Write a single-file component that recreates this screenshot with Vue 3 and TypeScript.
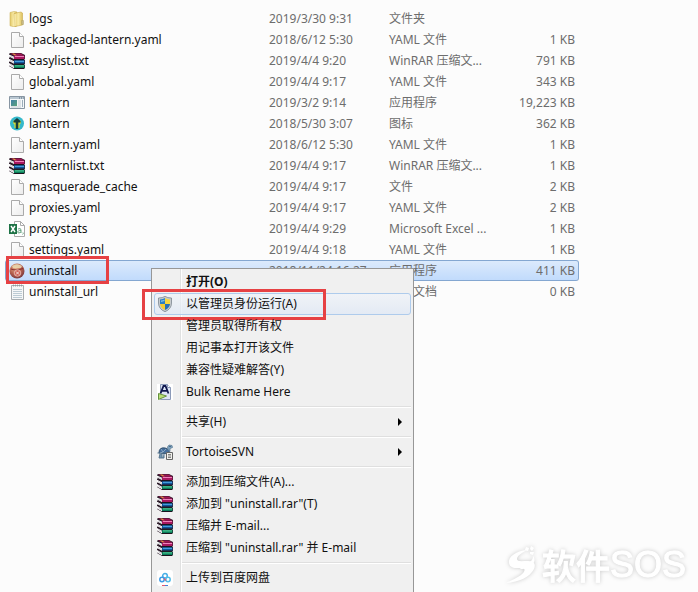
<script setup lang="ts">
type IconName =
  | 'folder' | 'page' | 'rar' | 'window' | 'lantern' | 'excel' | 'uninstall' | 'text'
  | 'shield' | 'rename' | 'tortoise' | 'cloud'

interface FileEntry {
  icon: IconName
  name: string
  date: string
  type: string
  size: string
  selected?: boolean
}

interface MenuEntry {
  label: string
  icon?: IconName
  bold?: boolean
  active?: boolean
  submenu?: boolean
}

const files: FileEntry[] = [
  { icon: 'folder', name: 'logs', date: '2019/3/30 9:31', type: '文件夹', size: '' },
  { icon: 'page', name: '.packaged-lantern.yaml', date: '2018/6/12 5:30', type: 'YAML 文件', size: '1 KB' },
  { icon: 'rar', name: 'easylist.txt', date: '2019/4/4 9:20', type: 'WinRAR 压缩文...', size: '791 KB' },
  { icon: 'page', name: 'global.yaml', date: '2019/4/4 9:17', type: 'YAML 文件', size: '343 KB' },
  { icon: 'window', name: 'lantern', date: '2019/3/2 9:14', type: '应用程序', size: '19,223 KB' },
  { icon: 'lantern', name: 'lantern', date: '2018/5/30 3:07', type: '图标', size: '362 KB' },
  { icon: 'page', name: 'lantern.yaml', date: '2018/6/12 5:30', type: 'YAML 文件', size: '1 KB' },
  { icon: 'rar', name: 'lanternlist.txt', date: '2019/4/4 9:17', type: 'WinRAR 压缩文...', size: '1 KB' },
  { icon: 'page', name: 'masquerade_cache', date: '2019/4/4 9:17', type: '文件', size: '2 KB' },
  { icon: 'page', name: 'proxies.yaml', date: '2019/4/4 9:17', type: 'YAML 文件', size: '2 KB' },
  { icon: 'excel', name: 'proxystats', date: '2019/4/4 9:29', type: 'Microsoft Excel ...', size: '1 KB' },
  { icon: 'page', name: 'settings.yaml', date: '2019/4/4 9:18', type: 'YAML 文件', size: '1 KB' },
  { icon: 'uninstall', name: 'uninstall', date: '2018/11/24 16:27', type: '应用程序', size: '411 KB', selected: true },
  { icon: 'text', name: 'uninstall_url', date: '', type: '文本文档', size: '0 KB' },
]

const menuGroups: MenuEntry[][] = [
  [
    { label: '打开(O)', bold: true },
    { label: '以管理员身份运行(A)', icon: 'shield', active: true },
    { label: '管理员取得所有权' },
    { label: '用记事本打开该文件' },
    { label: '兼容性疑难解答(Y)' },
    { label: 'Bulk Rename Here', icon: 'rename' },
  ],
  [{ label: '共享(H)', submenu: true }],
  [{ label: 'TortoiseSVN', icon: 'tortoise', submenu: true }],
  [
    { label: '添加到压缩文件(A)...', icon: 'rar' },
    { label: '添加到 "uninstall.rar"(T)', icon: 'rar' },
    { label: '压缩并 E-mail...', icon: 'rar' },
    { label: '压缩到 "uninstall.rar" 并 E-mail', icon: 'rar' },
  ],
  [{ label: '上传到百度网盘', icon: 'cloud' }],
]
</script>

<template>
  <svg class="sprite" aria-hidden="true">
    <defs>
      <linearGradient id="gold" x1="0" x2="1" y1="0" y2="0">
        <stop offset="0" stop-color="#e3c866" /><stop offset="0.5" stop-color="#f8eaa6" /><stop offset="1" stop-color="#dcbf5c" />
      </linearGradient>
      <linearGradient id="paper" x1="0" x2="1" y1="0" y2="1">
        <stop offset="0" stop-color="#fff" /><stop offset="1" stop-color="#ececec" />
      </linearGradient>
      <radialGradient id="ball" cx="0.4" cy="0.3" r="0.8">
        <stop offset="0" stop-color="#e8b28c" /><stop offset="0.5" stop-color="#b5604f" /><stop offset="1" stop-color="#6b2f38" />
      </radialGradient>
      <linearGradient id="pane" x1="0" x2="1" y1="0" y2="1">
        <stop offset="0" stop-color="#3f7fa8" /><stop offset="1" stop-color="#5aa37c" />
      </linearGradient>
    </defs>
    <symbol id="icon-folder" viewBox="0 0 16 16">
      <path d="M1 1.500 5 .5 8 1v14l-3 .8-4-1z" fill="url(#gold)" stroke="#cdb25a" stroke-width=".6" />
      <path d="M5 2.500 12 1l1.500 1v12L6 15.500z" fill="url(#gold)" stroke="#c9aa4e" stroke-width=".6" />
      <path d="M6 3v12" stroke="#fff6c8" />
      <path d="M12.500 9.500h2v4h-2z" fill="#c6b98a" stroke="#a99955" stroke-width=".4" />
    </symbol>
    <symbol id="icon-page" viewBox="0 0 16 16">
      <path d="M2.500.5h8l4 4v11h-12z" fill="url(#paper)" stroke="#aaa" />
      <path d="M10.500.5v4h4" fill="#fff" stroke="#aaa" />
    </symbol>
    <symbol id="icon-rar" viewBox="0 0 16 16">
      <path d="M1 0h11l4 2v4l-1 .5 1 .5v4l-1 .5 1 .5v3l-1 1H5l-5-3V9l1-1-1-1V5l1-1-1-1V1z" fill="#2a1a28" />
      <path d="M1 .5h11l3 2H5z" fill="#a01553" />
      <path d="m3 .5 3 2h2l-3-2z" fill="#e0a13c" />
      <path d="M5 2.500h10.500V6H5z" fill="#a81860" /><path d="M6 3h9v1H6z" fill="#f07fba" />
      <path d="m0 1.500 5 2.300V6L0 3.500zM0 5.800l5 2.500v2.500L0 8zM0 10l5 2.700v2.500L0 12.500z" fill="#fff" />
      <path d="m1 2.900 4 2M1 7.300l4 2.300M1 11.500l4 2.400" stroke="#9b9ba3" stroke-width=".5" />
      <path d="M5 7.200h10.500v3.400H5z" fill="#10549b" /><path d="M6 7.800h9v1H6z" fill="#4fb1ea" />
      <path d="M5 11.800h10.500v3.200H5z" fill="#0a7c58" /><path d="M6 12.400h9v1H6z" fill="#59d8a2" />
      <path d="M5 6.600h10M5 11.200h10M5 15.500h10" stroke="#19131c" stroke-width=".9" />
    </symbol>
    <symbol id="icon-window" viewBox="0 0 16 16">
      <path d="M.5 1.500h15v12H.5z" fill="#f5f8fa" stroke="#8795a2" />
      <path d="M1 2h14v2H1z" fill="#b9c7d2" /><path d="M10 2.500h1v1h-1zM12 2.500h1v1h-1zM14 2.500h.7v1H14z" fill="#576b7b" />
      <path d="M2 5h6v6H2z" fill="url(#pane)" />
      <path d="M9 6h3M9 8h3M9 10h3M2 12h10" stroke="#c4ccd1" /><path d="M13 5h1v7h-1z" fill="#9caebb" />
    </symbol>
    <symbol id="icon-lantern" viewBox="0 0 16 16">
      <circle cx="8" cy="7.500" r="7" fill="#35b9cb" />
      <path d="M4.500 4.500h7l.5 2.500-1.500 1.500V12h-5V8.500L4 7z" fill="#d5df36" />
      <path d="M8 2 4.500 5v1.500h2.200V13h2.600V6.500h2.200V5z" fill="#183d3c" />
    </symbol>
    <symbol id="icon-excel" viewBox="0 0 16 16">
      <path d="M5.500.5h6l4 4v11h-10z" fill="#fff" stroke="#aaa" /><path d="M11.500.5v4h4" fill="none" stroke="#aaa" />
      <path d="M0 3h8v10H0z" fill="#1e7346" /><path d="m2 5 4 6M6 5l-4 6" stroke="#fff" stroke-width="1.400" />
      <path d="M9 8q3-1.400 3 1v3M12 9.500c-4-.2-4 2.500-2 2.500l2-1M14 11.500q.8.8-.4 2" fill="none" stroke="#69a584" />
    </symbol>
    <symbol id="icon-uninstall" viewBox="0 0 16 16">
      <circle cx="8" cy="8" r="7.500" fill="url(#ball)" />
      <path d="M3 3q5-3.500 10 0l-1 2H4z" fill="#ead9b0" opacity=".85" />
      <path d="M2 6q6 2 12-.5" fill="none" stroke="#8a3030" stroke-width="1.200" />
      <circle cx="8.500" cy="10" r="3.300" fill="#cf6257" stroke="#e9c1b7" stroke-width=".8" /><path d="m7 8.500 3 3m0-3-3 3" stroke="#f7e4df" />
    </symbol>
    <symbol id="icon-text" viewBox="0 0 16 16">
      <path d="M2.500 1.500h12v14h-12z" fill="#f5f7f8" stroke="#a8aeb1" />
      <path d="M4 5.500h9M4 7.500h9M4 9.500h9M4 11.500h9M4 13.500h9" stroke="#bccbd4" />
      <path d="M4.500.5v2M6.500.5v2M8.500.5v2M10.500.5v2M12.500.5v2" stroke="#8d9498" stroke-width=".8" />
    </symbol>
    <symbol id="icon-shield" viewBox="0 0 16 16">
      <path d="M8 .4Q10.500 2 14.500 2v5q0 6-6.500 8.700Q1.500 13 1.500 7V2Q5.500 2 8 .4z" fill="#c7ccd0" stroke="#7c8790" stroke-width=".8" />
      <path d="M8 2v6H3V3.500Q6 3.300 8 2z" fill="#2b80c4" /><path d="M8 2v6h5V3.500Q10 3.300 8 2z" fill="#f7d73f" />
      <path d="M3 8h5v6Q3.500 12 3 8z" fill="#f3cc32" /><path d="M13 8H8v6q4.500-2 5-6z" fill="#2870b5" />
      <path d="M4 4.500Q6 4.300 7.500 3.400V5L4 6z" fill="#83bfe5" />
    </symbol>
    <symbol id="icon-rename" viewBox="0 0 16 16">
      <path d="M0 0h16v16H0z" fill="#fff" />
      <path d="M3.500.5h7l3 3v12h-10z" fill="#dce4f5" stroke="#8c9bb9" /><path d="M10.500.5v3h3" fill="#fff" stroke="#8c9bb9" />
      <path d="M3.500 9.500 6.500 2h2l3 7.500M5 6.800h5" fill="none" stroke="#10184f" stroke-width="1.800" />
      <path d="M1.500 9.500 9.500 12l-8 3.500z" fill="#b9df76" stroke="#64903d" />
    </symbol>
    <symbol id="icon-tortoise" viewBox="0 0 16 16">
      <path d="M2 9q0-6 6-5 4 .5 5 6z" fill="#476f9d" stroke="#2f4d6b" />
      <path d="M11 6 10.500 3 12 1l3 .5.5 2-2.500 1v3z" fill="#7ea5c4" stroke="#58778e" stroke-width=".7" />
      <path d="M.5 9h10M3 10l-1 4h3v-4M7 10v4H5" fill="#7396b2" stroke="#54748e" />
      <path d="m4 5 2 3 3-3M6 8l-3 1" stroke="#a5bed3" fill="none" stroke-width=".7" /><circle cx="13" cy="2.500" r=".6" fill="#17283a" />
      <path d="M9.500 8.500h6v7h-6z" fill="#f1f1ed" stroke="#666" /><path d="M11 10.500h3M11 12h3M11 13.500h3" stroke="#555" stroke-width=".7" />
    </symbol>
    <symbol id="icon-cloud" viewBox="0 0 16 16">
      <rect width="16" height="16" rx="3" fill="#fff" />
      <g fill="none" stroke-width="1.500"><circle cx="8" cy="5.800" r="2.300" stroke="#48afe7" /><circle cx="5" cy="9.500" r="2.200" stroke="#3c9be7" /><circle cx="11" cy="9.500" r="2.200" stroke="#52bde8" /></g>
      <path d="m7 8.500 2 2" stroke="#e7576f" stroke-width="1.300" /><path d="M5 15.500h3" stroke="#e7576f" /><path d="M8 15.500h3" stroke="#4383d8" />
    </symbol>
  </svg>

  <main class="explorer">
    <table class="files">
      <colgroup>
        <col class="col-name" /><col class="col-date" /><col class="col-type" /><col class="col-size" />
      </colgroup>
      <tbody>
        <tr v-for="(file, i) in files" :key="i" :class="{ selected: file.selected }">
          <td>
            <div class="name">
              <svg class="icon"><use :href="'#icon-' + file.icon" /></svg>
              <span>{{ file.name }}</span>
            </div>
          </td>
          <td>{{ file.date }}</td>
          <td>{{ file.type }}</td>
          <td class="size">{{ file.size }}</td>
        </tr>
      </tbody>
    </table>

    <div class="menu" role="menu">
      <div v-for="(group, g) in menuGroups" :key="g" class="group" role="group">
        <button
          v-for="item in group"
          :key="item.label"
          type="button"
          role="menuitem"
          class="item"
          :class="{ bold: item.bold, active: item.active }"
        >
          <span class="slot">
            <svg v-if="item.icon" class="icon"><use :href="'#icon-' + item.icon" /></svg>
          </span>
          <span class="label">{{ item.label }}</span>
          <svg v-if="item.submenu" class="arrow" viewBox="0 0 4 8"><path d="M0 0 4 4 0 8z" /></svg>
        </button>
      </div>
    </div>

    <div class="watermark">
      <svg class="mark" viewBox="0 0 32 40">
        <path d="M22 5C9 6 2 12 3 18c1 6 8 5 13 5 4 0 3 4-1 7-4 3-9 5-15 8 13-1 24-6 28-14 2-5 0-8-6-8-6 0-11 1-11-2 0-3 5-7 11-9z" />
        <path d="M10 20c9 0 18-3 17-9 5 7-4 13-12 13M20 2l3 1-1 3-3-1zM25 1l3 2-2 3-2-2zM24 7l4 0-1 3-3-1z" />
      </svg>
      <span class="brand">软件</span><span class="brand latin">SOS</span>
    </div>
  </main>
</template>

<style>
body {
  background: #fcfcfc;
  overflow: hidden;
}
</style>

<style scoped>
.sprite {
  position: absolute;
  width: 0;
  height: 0;
}

.explorer {
  position: relative;
  box-sizing: border-box;
  height: 100vh;
  padding: 8px 5px;
  overflow: hidden;
  color: #111;
  font: 12px/19px "Noto Sans", "Noto Sans CJK SC", sans-serif;
}

.icon {
  display: block;
  flex: none;
  width: 16px;
  height: 16px;
}

.files {
  table-layout: fixed;
  width: 574px;
  border-spacing: 0;
}

.col-name { width: 260px; }
.col-date { width: 120px; }
.col-type { width: 112px; }

.files td {
  height: 19px;
  padding: 0 4px;
  border: 0 solid transparent;
  border-width: 1px 0;
  color: #6d6d6d;
  white-space: nowrap;
}

.files .size {
  text-align: right;
}

.name {
  position: relative;
  display: flex;
  align-items: center;
  gap: 4px;
  height: 19px;
  color: #111;
}

.selected td {
  background: linear-gradient(#dceafc, #c1dbfc) padding-box;
  border-color: #84a7d1;
}

.selected td:first-child {
  border-left-width: 1px;
  border-radius: 3px 0 0 3px;
  padding-left: 3px;
}

.selected td:last-child {
  border-right-width: 1px;
  border-radius: 0 3px 3px 0;
  padding-right: 3px;
}

.selected .name::after,
.active::after {
  content: "";
  position: absolute;
  box-sizing: border-box;
  border: 3px solid #e64144;
}

.selected .name::after {
  top: -5px;
  left: -3px;
  width: 103px;
  height: 28px;
}

.menu {
  position: absolute;
  top: 268px;
  left: 151px;
  box-sizing: border-box;
  width: 263px;
  padding: 2px 2px 12px;
  border: 1px solid #979797;
  background:
    linear-gradient(90deg, #e0e1e1 1px, #fff 1px) 28px 0 / 2px 100% no-repeat,
    #f0f0f0;
}

.group + .group::before {
  content: "";
  display: block;
  height: 1px;
  margin: 3px 0 3px 28px;
  border-bottom: 1px solid #fff;
  background: #dfdfdf;
}

.item {
  position: relative;
  display: flex;
  align-items: center;
  box-sizing: border-box;
  width: 100%;
  height: 22px;
  padding: 0 8px 0 2px;
  border: 1px solid transparent;
  border-radius: 3px;
  background: none;
  color: #111;
  font: inherit;
  text-align: left;
}

.active {
  border-color: #aecbec;
  background: linear-gradient(rgba(240, 244, 250, 0.7), rgba(222, 232, 246, 0.7));
}

.active::after {
  top: -5px;
  left: -13px;
  width: 184px;
  height: 31px;
}

.bold {
  font-weight: 700;
}

.slot {
  flex: none;
  width: 29px;
}

.label {
  flex: 1;
  line-height: 18px;
  white-space: nowrap;
}

.arrow {
  width: 4px;
  height: 8px;
}

.watermark {
  position: absolute;
  right: 12px;
  bottom: 7px;
  display: flex;
  align-items: center;
  color: #fff;
  filter: drop-shadow(0 0 2px rgba(0, 0, 0, 0.2));
}

.mark {
  width: 32px;
  height: 40px;
  margin-right: 4px;
  fill: #fff;
}

.brand {
  font: 500 34px/40px "Noto Sans CJK SC", sans-serif;
  -webkit-text-stroke: 1px #fff;
}

.latin {
  font: 36px/40px "Liberation Sans", sans-serif;
}
</style>
